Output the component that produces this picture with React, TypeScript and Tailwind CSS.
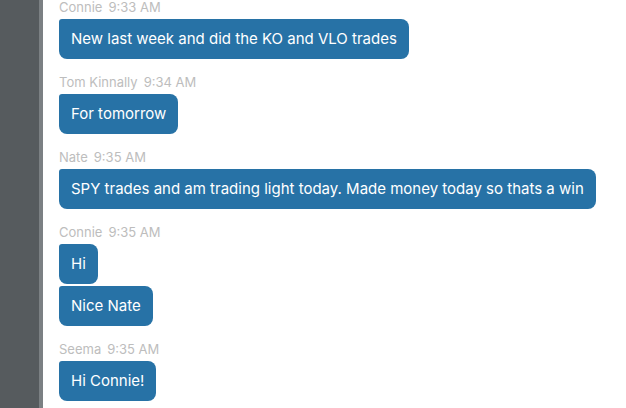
import React from "react";

type Msg = { name: string; time: string; texts: string[] };

const messages: Msg[] = [
  { name: "Connie", time: "9:33 AM", texts: ["New last week and did the KO and VLO trades"] },
  { name: "Tom Kinnally", time: "9:34 AM", texts: ["For tomorrow"] },
  { name: "Nate", time: "9:35 AM", texts: ["SPY trades and am trading light today. Made money today so thats a win"] },
  { name: "Connie", time: "9:35 AM", texts: ["Hi", "Nice Nate"] },
  { name: "Seema", time: "9:35 AM", texts: ["Hi Connie!"] },
];

export default function App() {
  return (
    <div
      className="flex h-[408px] w-full overflow-hidden bg-white"
      style={{ fontFamily: "Inter, 'Liberation Sans', sans-serif" }}
    >
      <div className="w-[39px] shrink-0 bg-[#565b5e]" />
      <div className="w-[4px] shrink-0 bg-[#7b8083]" />
      <div className="flex flex-1 flex-col gap-[16px] pl-[16px]">
        {messages.map((m, i) => (
          <div key={i} className="flex flex-col items-start">
            <div className="h-[19px] text-[13px] leading-[14px] text-[#bdbdbd]">
              {m.name}
              <span className="ml-[6px]">{m.time}</span>
            </div>
            <div className="flex flex-col items-start gap-[2px]">
              {m.texts.map((t, j) => (
                <div
                  key={j}
                  className="rounded-[8px] rounded-tl-[3px] bg-[#2772a6] px-[12px] py-[10px] text-[15px] leading-[20px] text-white"
                >
                  {t}
                </div>
              ))}
            </div>
          </div>
        ))}
      </div>
    </div>
  );
}
